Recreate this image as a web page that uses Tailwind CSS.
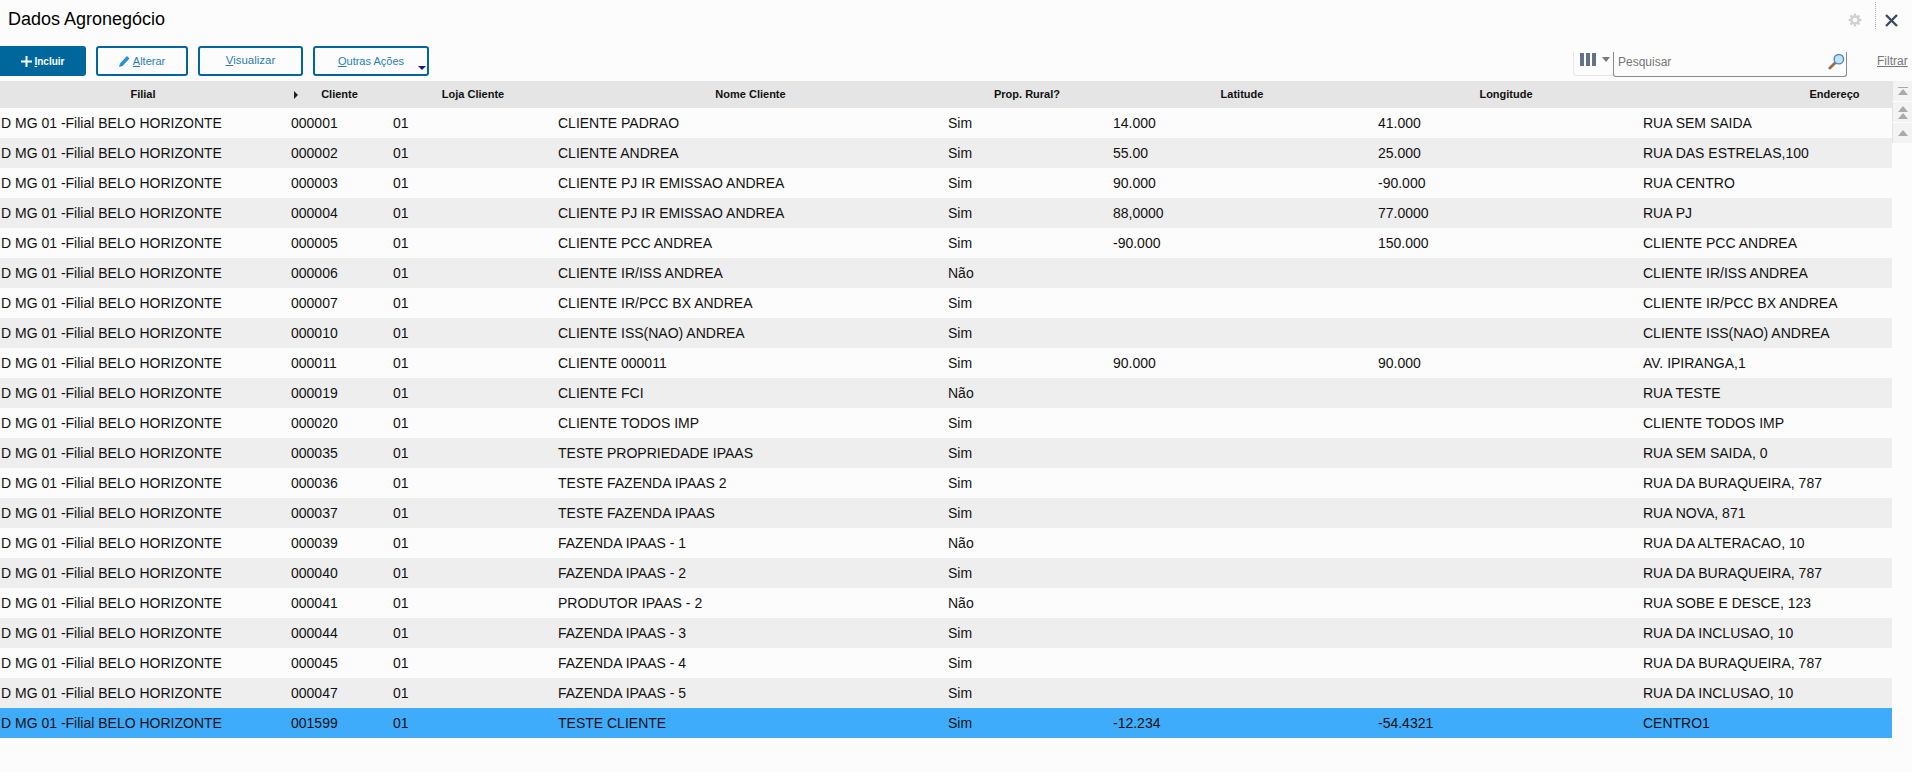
<!DOCTYPE html>
<html lang="pt-BR">
<head>
  <meta charset="UTF-8">
  <meta name="viewport" content="width=device-width, initial-scale=1">
  <title>Dados Agronegócio</title>
  <script src="https://cdn.jsdelivr.net/npm/@tailwindcss/browser@4"></script>
</head>
<body class="bg-[#fcfcfc] font-['Liberation_Sans',Arial,sans-serif] text-[#111] overflow-hidden">
  <div class="w-[1912px] h-[772px] flex flex-col overflow-hidden">

    <header class="h-[46px] flex items-start shrink-0">
      <h1 class="pl-2 pt-[8px] text-[18px] leading-[22px] text-black">Dados Agronegócio</h1>
      <div class="ml-auto flex items-start h-full">
        <svg class="mt-[13px] mr-[13px]" width="14" height="14" viewBox="0 0 24 24" fill="none" stroke="#d0d0d0"><circle cx="12" cy="12" r="6" stroke-width="4"/><path stroke-width="4" d="M12 1v5M12 18v5M1 12h5M18 12h5M4.200 4.200l3.500 3.500M16.300 16.300l3.500 3.500M4.200 19.800l3.500-3.500M16.300 7.700l3.500-3.500"/></svg>
        <div class="mt-[2px] h-[27px] border-l border-dotted border-[#aaa]"></div>
        <svg class="mt-[14px] ml-[9px] mr-[14px]" width="13" height="13" viewBox="0 0 13 13" fill="none" stroke="#3d4a5f" stroke-width="2.400"><path d="M1 1l11 11M12 1L1 12"/></svg>
      </div>
    </header>

    <div class="h-[35px] flex items-start shrink-0">
      <button class="w-[86px] h-[30px] bg-[#00679c] rounded-r-[3px] text-white text-[10px] font-bold flex items-center justify-center gap-[2px]">
        <svg width="11" height="11" viewBox="0 0 11 11" fill="none" stroke="#fff" stroke-width="2"><path d="M5.500 0v11M0 5.500h11"/></svg>
        <span><u>I</u>ncluir</span>
      </button>
      <button class="ml-[10px] w-[92px] h-[30px] border-2 border-[#00679c] rounded-[3px] text-[#2a7fb0] text-[11px] flex items-center justify-center gap-[2px]">
        <svg width="12" height="12" viewBox="0 0 12 12" fill="#2a8fd0"><path d="M0 12l1-3.500 7-7.500 2.500 2.500-7 7.500z"/></svg>
        <span><u>A</u>lterar</span>
      </button>
      <button class="ml-[10px] w-[105px] h-[30px] border-2 border-[#00679c] rounded-[3px] text-[#2a7fb0] text-[11.500px]"><u>V</u>isualizar</button>
      <button class="relative ml-[10px] w-[116px] h-[30px] border-2 border-[#00679c] rounded-[3px] text-[#2a7fb0] text-[11px]">
        <u>O</u>utras Ações
        <span class="absolute right-[1px] bottom-[4px] w-0 h-0 border-x-[4px] border-x-transparent border-t-[4px] border-t-[#1b1b8f]"></span>
      </button>

      <div class="ml-auto flex items-start">
        <div class="w-[41px] h-[24px] mt-[6px] border border-t-0 border-[#e6e6e6] rounded-b-[3px] flex items-start pl-[6px] gap-[2px] -mr-px">
          <span class="w-[4px] h-[13px] mt-[1px] bg-[#667086]"></span>
          <span class="w-[4px] h-[13px] mt-[1px] bg-[#667086]"></span>
          <span class="w-[4px] h-[13px] mt-[1px] bg-[#667086]"></span>
          <span class="ml-[4px] mt-[5px] w-0 h-0 border-x-[4px] border-x-transparent border-t-[5px] border-t-[#778]"></span>
        </div>
        <div class="w-[234px] h-[25px] mt-[6px] border border-t-0 border-[#8a8a8a] rounded-b-[3px] flex items-start pl-[4px] text-[12px] leading-[14px] text-[#777]">
          <span class="mt-[3px]">Pesquisar</span>
          <svg class="ml-auto mr-[1px] mt-[1px]" width="17" height="17" viewBox="0 0 18 18"><path d="M8 10L2 16" stroke="#9c6b4a" stroke-width="3" stroke-linecap="round"/><circle cx="11.500" cy="6.500" r="5" fill="#bfe3f7" stroke="#4f8db5" stroke-width="1.500"/></svg>
        </div>
        <span class="w-[65px] pl-[30px] pt-[8px] text-[12px] leading-[14px] text-[#777] underline">Filtrar</span>
      </div>
    </div>

    <div class="flex-1 flex items-start overflow-hidden">
      <div class="w-[1892px] overflow-hidden shrink-0">
        <div class="w-[2031px]">
          <div class="h-[27px] bg-[#e5e5e5] grid grid-cols-[286px_102px_165px_390px_165px_265px_265px_393px] text-[11px] font-bold leading-[27px] text-center">
            <div>Filial</div>
            <div class="relative pl-[5px]">Cliente<span class="absolute left-[8px] top-[10px] w-0 h-0 border-y-[4px] border-y-transparent border-l-[4px] border-l-[#222]"></span></div>
            <div class="pl-[5px]">Loja Cliente</div>
            <div class="pl-[5px]">Nome Cliente</div>
            <div class="pl-[3px]">Prop. Rural?</div>
            <div class="pl-[3px]">Latitude</div>
            <div class="pl-[1px]">Longitude</div>
            <div>Endereço</div>
          </div>
          <div id="rows"></div>
        </div>
      </div>
      <div class="w-[20px] shrink-0 flex flex-col gap-px">
        <div class="h-[20px] bg-[#f3f3f3] border-l border-[#e2e2e2] flex flex-col items-center justify-center">
          <span class="w-[10px] h-px bg-[#aaa] mb-[1px]"></span>
          <span class="w-0 h-0 border-x-[5px] border-x-transparent border-b-[6px] border-b-[#aaa]"></span>
        </div>
        <div class="h-[20px] bg-[#f3f3f3] border-l border-[#e2e2e2] flex flex-col items-center justify-center gap-px">
          <span class="w-0 h-0 border-x-[5px] border-x-transparent border-b-[6px] border-b-[#aaa]"></span>
          <span class="w-0 h-0 border-x-[5px] border-x-transparent border-b-[6px] border-b-[#aaa]"></span>
        </div>
        <div class="h-[20px] bg-[#f3f3f3] border-l border-[#e2e2e2] flex items-center justify-center">
          <span class="w-0 h-0 border-x-[5px] border-x-transparent border-b-[6px] border-b-[#aaa]"></span>
        </div>
      </div>
    </div>
  </div>

  <script>
    const filial = "D MG 01 -Filial BELO HORIZONTE";
    const data = [
      ["000001","CLIENTE PADRAO","Sim","14.000","41.000","RUA SEM SAIDA"],
      ["000002","CLIENTE ANDREA","Sim","55.00","25.000","RUA DAS ESTRELAS,100"],
      ["000003","CLIENTE PJ IR EMISSAO ANDREA","Sim","90.000","-90.000","RUA CENTRO"],
      ["000004","CLIENTE PJ IR EMISSAO ANDREA","Sim","88,0000","77.0000","RUA PJ"],
      ["000005","CLIENTE PCC ANDREA","Sim","-90.000","150.000","CLIENTE PCC ANDREA"],
      ["000006","CLIENTE IR/ISS ANDREA","Não","","","CLIENTE IR/ISS ANDREA"],
      ["000007","CLIENTE IR/PCC BX ANDREA","Sim","","","CLIENTE IR/PCC BX ANDREA"],
      ["000010","CLIENTE ISS(NAO) ANDREA","Sim","","","CLIENTE ISS(NAO) ANDREA"],
      ["000011","CLIENTE 000011","Sim","90.000","90.000","AV. IPIRANGA,1"],
      ["000019","CLIENTE FCI","Não","","","RUA TESTE"],
      ["000020","CLIENTE TODOS IMP","Sim","","","CLIENTE TODOS IMP"],
      ["000035","TESTE PROPRIEDADE IPAAS","Sim","","","RUA SEM SAIDA, 0"],
      ["000036","TESTE FAZENDA IPAAS 2","Sim","","","RUA DA BURAQUEIRA, 787"],
      ["000037","TESTE FAZENDA IPAAS","Sim","","","RUA NOVA, 871"],
      ["000039","FAZENDA IPAAS - 1","Não","","","RUA DA ALTERACAO, 10"],
      ["000040","FAZENDA IPAAS - 2","Sim","","","RUA DA BURAQUEIRA, 787"],
      ["000041","PRODUTOR IPAAS - 2","Não","","","RUA SOBE E DESCE, 123"],
      ["000044","FAZENDA IPAAS - 3","Sim","","","RUA DA INCLUSAO, 10"],
      ["000045","FAZENDA IPAAS - 4","Sim","","","RUA DA BURAQUEIRA, 787"],
      ["000047","FAZENDA IPAAS - 5","Sim","","","RUA DA INCLUSAO, 10"],
      ["001599","TESTE CLIENTE","Sim","-12.234","-54.4321","CENTRO1"]
    ];

    document.getElementById("rows").innerHTML = data.map((r, i) => {
      let bg = i % 2 ? "bg-[#eeeeee]" : "bg-[#fcfcfc]";
      if (i === data.length - 1) bg = "bg-[#3fabfb]";
      return `<div class="h-[30px] ${bg} grid grid-cols-[286px_102px_165px_390px_165px_265px_265px_393px] text-[14px] leading-[30px] whitespace-nowrap">
        <div class="pl-[1px]">${filial}</div>
        <div class="pl-[5px]">${r[0]}</div>
        <div class="pl-[5px]">01</div>
        <div class="pl-[5px]">${r[1]}</div>
        <div class="pl-[5px]">${r[2]}</div>
        <div class="pl-[5px]">${r[3]}</div>
        <div class="pl-[5px]">${r[4]}</div>
        <div class="pl-[5px]">${r[5]}</div>
      </div>`;
    }).join("");
  </script>
</body>
</html>
